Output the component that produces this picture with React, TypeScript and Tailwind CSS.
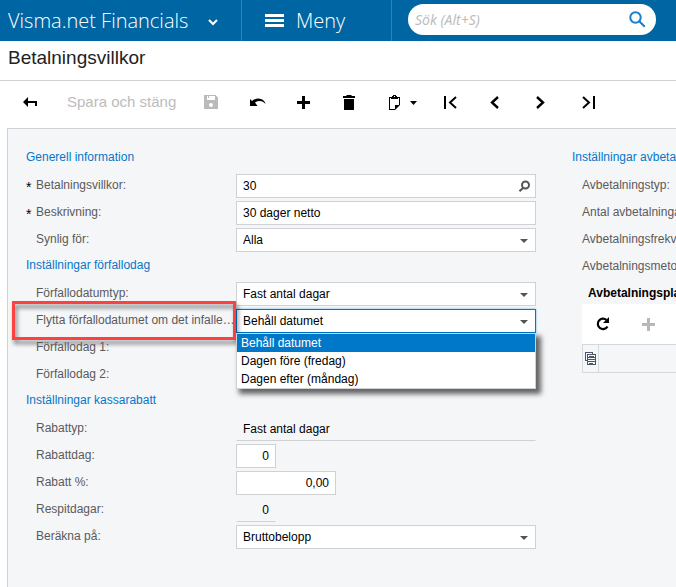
import type { ReactNode } from "react";

const inputBase = "h-6 border px-1.5 text-xs text-black outline-none";

function Row({ children }: { children: ReactNode }) {
  return <div className="relative flex h-6">{children}</div>;
}

function Label({ id, text, required }: { id: string; text: string; required?: boolean }) {
  return (
    <label htmlFor={id} className="flex h-[22px] w-[210px] shrink-0 items-center whitespace-nowrap text-[#5a5a5c]">
      <span className="w-2.5 shrink-0 pt-1 text-sm leading-4 text-black">{required ? "*" : ""}</span>
      {text}
    </label>
  );
}

function Heading({ text }: { text: string }) {
  return <h2 className="flex h-6 items-center whitespace-nowrap pb-1 text-[#0676c8]">{text}</h2>;
}

function SelectField({ id, options, active }: { id: string; options: string[]; active?: boolean }) {
  return (
    <div className="relative flex-1">
      <select
        id={id}
        className={
          active
            ? `${inputBase} w-full appearance-none border-[#0078ca] bg-white shadow-[0_0_2px_#4fb0ee]`
            : `${inputBase} w-full appearance-none border-[#cfd1d4] bg-white`
        }
      >
        {options.map((option) => (
          <option key={option}>{option}</option>
        ))}
      </select>
      <svg className="pointer-events-none absolute right-2 top-[11px]" width="8" height="4" viewBox="0 0 8 4" fill="#555">
        <path d="M0 0h8L4 4z" />
      </svg>
    </div>
  );
}

function TextField({ id, value }: { id: string; value: string }) {
  return <input id={id} defaultValue={value} className={`${inputBase} min-w-0 flex-1 border-[#cfd1d4] bg-white`} />;
}

function ToolButton({ label, className, children }: { label: string; className?: string; children: ReactNode }) {
  return (
    <button type="button" aria-label={label} className={`flex h-8 shrink-0 items-center justify-center ${className ?? "w-8"}`}>
      {children}
    </button>
  );
}

function Header() {
  return (
    <header className="flex h-[41px] bg-[#0066a3] font-['Open_Sans',sans-serif] text-white">
      <button type="button" className="flex w-[242px] shrink-0 items-center border-r border-[#2c83b8] pl-2 text-xl font-light">
        <span className="whitespace-nowrap">Visma.net Financials</span>
        <svg className="ml-5 mt-1" width="10" height="7" viewBox="0 0 10 7" fill="none" stroke="white" strokeWidth="2">
          <path d="M1 1l4 4 4-4" />
        </svg>
      </button>
      <button type="button" className="flex w-[150px] shrink-0 items-center border-r border-[#2c83b8] pl-[23px] text-xl font-light">
        <svg width="19" height="13" viewBox="0 0 19 13" fill="white">
          <path d="M0 0h19v3H0zM0 5h19v3H0zM0 10h19v3H0z" />
        </svg>
        <span className="ml-3">Meny</span>
      </button>
      <div className="ml-4 mr-5 mt-1 flex h-[31px] min-w-0 flex-1 items-center rounded-full bg-white pl-[7px] pr-2.5">
        <input
          aria-label="Sök"
          placeholder="Sök (Alt+S)"
          className="h-full min-w-0 flex-1 font-['Noto_Sans',sans-serif] text-sm italic text-black outline-none placeholder:text-[#bdbdbd]"
        />
        <button type="button" aria-label="Sök nu">
          <svg width="17" height="17" viewBox="0 0 17 17" fill="none" stroke="#1b7fd0" strokeWidth="2">
            <circle cx="6.5" cy="6.5" r="5.2" />
            <path d="M10.3 10.3l5.5 5.5" />
          </svg>
        </button>
      </div>
    </header>
  );
}

function Toolbar() {
  return (
    <div className="flex h-[47px] items-center border-t border-[#cfd1d4] pl-3.5 pb-1">
      <ToolButton label="Tillbaka">
        <svg width="14" height="10" viewBox="0 0 14 10" fill="black">
          <path d="M0 5l5-5v4h9v5h-2V6H5v4z" />
        </svg>
      </ToolButton>
      <button type="button" disabled className="ml-[21px] w-[107px] shrink-0 whitespace-nowrap text-left text-[15px] text-[#bcbcbc]">
        Spara och stäng
      </button>
      <ToolButton label="Spara" className="ml-[21px] w-8">
        <svg width="14" height="14" viewBox="0 0 14 14" fill="#bababa">
          <path fillRule="evenodd" d="M0 0h11.5L14 2.5V14H0zM3 1v4h8V1H5v2H4V1zM7 8a2 2 0 1 0 0 4 2 2 0 0 0 0-4z" />
        </svg>
      </ToolButton>
      <ToolButton label="Ångra" className="ml-[15px] w-8">
        <svg width="16" height="9" viewBox="0 0 16 9" fill="black">
          <path d="M0 1l2 2C5 .5 8.500-.2 11 1c2.500 1 4 2.500 4.500 5C13 3 9 2 5 4.500L7.500 8H0z" />
        </svg>
      </ToolButton>
      <ToolButton label="Lägg till" className="ml-[13px] w-8">
        <svg width="13" height="13" viewBox="0 0 13 13" fill="black">
          <path d="M5 0h3v5h5v3H8v5H5V8H0V5h5z" />
        </svg>
      </ToolButton>
      <ToolButton label="Ta bort" className="ml-3.5 w-8">
        <svg width="12" height="15" viewBox="0 0 12 15" fill="black">
          <path d="M4 0h4l1 1h3v2H0V1h3zM1 4h10v11H1z" />
        </svg>
      </ToolButton>
      <ToolButton label="Urklipp" className="ml-[18px] w-10">
        <svg width="28" height="15" viewBox="0 0 28 15" fill="black">
          <path
            fillRule="evenodd"
            d="M0 2h3V1h1V0h3v1h1v1h3v8l-5 5H0zM1 3v11h5v-4h4V3H9v1H2V3zM5 1v1h1V1z"
          />
          <path d="M21 6h7l-3.500 4z" />
        </svg>
      </ToolButton>
      <ToolButton label="Första" className="ml-[11px] w-8">
        <svg width="13" height="13" viewBox="0 0 13 13" fill="none" stroke="black" strokeWidth="2">
          <path d="M1 0v13M12 1L6 6.500l6 5.500" />
        </svg>
      </ToolButton>
      <ToolButton label="Föregående" className="ml-3 w-8">
        <svg width="9" height="13" viewBox="0 0 9 13" fill="none" stroke="black" strokeWidth="2.400">
          <path d="M8 1L2 6.500 8 12" />
        </svg>
      </ToolButton>
      <ToolButton label="Nästa" className="ml-3.5 w-8">
        <svg width="9" height="13" viewBox="0 0 9 13" fill="none" stroke="black" strokeWidth="2.400">
          <path d="M1 1l6 5.500L1 12" />
        </svg>
      </ToolButton>
      <ToolButton label="Sista" className="ml-4 w-8">
        <svg width="13" height="13" viewBox="0 0 13 13" fill="none" stroke="black" strokeWidth="2">
          <path d="M12 0v13M1 1l6 5.500L1 12" />
        </svg>
      </ToolButton>
    </div>
  );
}

const moveOptions = ["Behåll datumet", "Dagen före (fredag)", "Dagen efter (måndag)"];

function TermsForm() {
  return (
    <section className="flex w-[510px] shrink-0 flex-col gap-[3px]">
      <Heading text="Generell information" />
      <Row>
        <Label id="terms" text="Betalningsvillkor:" required />
        <div className="relative flex flex-1">
          <TextField id="terms" value="30" />
          <button type="button" aria-label="Sök villkor" className="absolute right-1.5 top-1.5">
            <svg width="11" height="12" viewBox="0 0 11 12" fill="none" stroke="#555" strokeWidth="2">
              <circle cx="6.500" cy="5" r="3.500" />
              <path d="M4 8L.5 11.200" />
            </svg>
          </button>
        </div>
      </Row>
      <Row>
        <Label id="description" text="Beskrivning:" required />
        <TextField id="description" value="30 dager netto" />
      </Row>
      <Row>
        <Label id="visible" text="Synlig för:" />
        <SelectField id="visible" options={["Alla"]} />
      </Row>
      <Heading text="Inställningar förfallodag" />
      <Row>
        <Label id="due-type" text="Förfallodatumtyp:" />
        <SelectField id="due-type" options={["Fast antal dagar"]} />
      </Row>
      <Row>
        <Label id="move-due" text="Flytta förfallodatumet om det infalle…" />
        <SelectField id="move-due" options={moveOptions} active />
        <ul
          role="listbox"
          aria-label="Flytta förfallodatumet"
          className="absolute left-[210px] right-0 top-6 z-10 border border-[#cfd1d4] bg-white leading-[18px] text-black shadow-[4px_4px_5px_1px_rgba(0,0,0,0.6)]"
        >
          {moveOptions.map((option, i) => (
            <li
              key={option}
              role="option"
              aria-selected={i === 0}
              className={i === 0 ? "bg-[#0078ca] px-1 text-white" : "px-1"}
            >
              {option}
            </li>
          ))}
        </ul>
        <div className="pointer-events-none absolute -bottom-[7px] -left-3.5 -top-2 w-[224px] border-3 border-[#fb4242] drop-shadow-[2px_4px_2px_rgba(0,0,0,0.5)]" />
      </Row>
      <Row>
        <Label id="due-day-1" text="Förfallodag 1:" />
      </Row>
      <Row>
        <Label id="due-day-2" text="Förfallodag 2:" />
      </Row>
      <Heading text="Inställningar kassarabatt" />
      <Row>
        <Label id="discount-type" text="Rabattyp:" />
        <input
          id="discount-type"
          readOnly
          value="Fast antal dagar"
          className={`${inputBase} min-w-0 flex-1 border-transparent border-b-[#cfd1d4]`}
        />
      </Row>
      <Row>
        <Label id="discount-day" text="Rabattdag:" />
        <input id="discount-day" defaultValue="0" className={`${inputBase} w-10 border-[#cfd1d4] bg-white text-right`} />
      </Row>
      <Row>
        <Label id="discount-percent" text="Rabatt %:" />
        <input id="discount-percent" defaultValue="0,00" className={`${inputBase} w-[100px] border-[#cfd1d4] bg-white text-right`} />
      </Row>
      <Row>
        <Label id="grace-days" text="Respitdagar:" />
        <input id="grace-days" readOnly value="0" className={`${inputBase} w-10 border-transparent border-b-[#cfd1d4] text-right`} />
      </Row>
      <Row>
        <Label id="calc-on" text="Beräkna på:" />
        <SelectField id="calc-on" options={["Bruttobelopp"]} />
      </Row>
    </section>
  );
}

function Installments() {
  return (
    <section className="flex min-w-0 flex-1 flex-col gap-[3px] overflow-hidden whitespace-nowrap text-[#5a5a5c]">
      <Heading text="Inställningar avbetalning" />
      {["Avbetalningstyp:", "Antal avbetalningar:", "Avbetalningsfrekvens:", "Avbetalningsmetod:"].map((text) => (
        <div key={text} className="flex h-6 items-center pb-0.5 pl-2.5">
          {text}
        </div>
      ))}
      <h3 className="flex h-[19px] items-center pl-4 pt-0.5 font-bold text-black">Avbetalningsplan</h3>
      <div className="ml-2.5">
        <div className="flex h-10 items-center bg-white pl-[5px]">
          <ToolButton label="Uppdatera">
            <svg width="14" height="14" viewBox="0 0 14 14" fill="none" stroke="black" strokeWidth="2.200">
              <path d="M10.500 3A5.200 5.200 0 1 0 11.500 9.500" />
              <path d="M13 0v6H7z" fill="black" stroke="none" />
            </svg>
          </ToolButton>
          <ToolButton label="Lägg till rad" className="ml-[13px] w-8">
            <svg width="13" height="13" viewBox="0 0 13 13" fill="#b8b8b8">
              <path d="M5 0h3v5h5v3H8v5H5V8H0V5h5z" />
            </svg>
          </ToolButton>
        </div>
        <table className="w-full border-collapse">
          <thead>
            <tr className="h-7 border border-r-0 border-[#d5d8dc]">
              <th className="w-4 border-r border-[#d5d8dc] p-0">
                <svg className="ml-0.5" width="11" height="13" viewBox="0 0 11 13" fill="none" stroke="#4b5668" shapeRendering="crispEdges">
                  <path d="M2.500 2.500h8v10h-8zM.5 8.500v-8h7v2M.5 8.500h2M2.500 5.500h8M2.500 9.500h8" />
                  <path d="M2 7.500h9M4 4.500h5M4 11.500h4" />
                </svg>
              </th>
              <th />
            </tr>
          </thead>
        </table>
      </div>
    </section>
  );
}

export default function App() {
  return (
    <div className="flex min-h-screen flex-col overflow-hidden bg-white font-['Liberation_Sans',Arial,sans-serif] text-xs">
      <Header />
      <h1 className="h-[39px] pl-2 pt-[3px] text-[19px] leading-7 text-[#222]">Betalningsvillkor</h1>
      <Toolbar />
      <main className="ml-[7px] mt-px flex flex-1 gap-9 border-l border-t border-[#cfd1d4] bg-[#f5f6f8] pb-9 pl-[18px] pt-[18px]">
        <TermsForm />
        <Installments />
      </main>
    </div>
  );
}
